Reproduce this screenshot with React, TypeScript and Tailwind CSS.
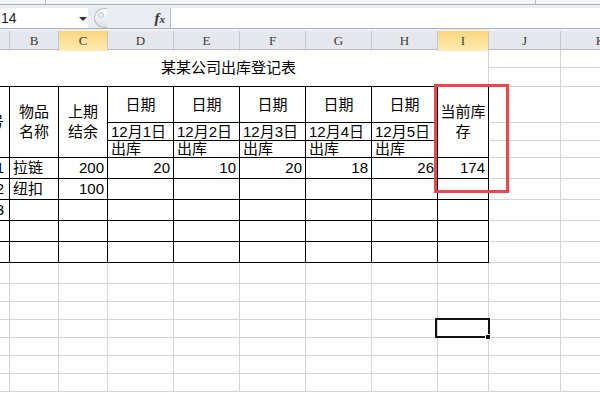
import React from "react";

type CellProps = {
  span?: string;
  edge?: string;
  align?: string;
  children?: React.ReactNode;
};

// one worksheet cell; right/bottom borders act as the gridlines
function Cell({ span = "", edge = "border-[#d4d4d4]", align = "justify-start pl-[3px]", children }: CellProps) {
  return (
    <div className={`${span} flex items-center overflow-hidden whitespace-nowrap border-r border-b ${edge} ${align}`}>
      {children}
    </div>
  );
}

const GRID = "border-[#d4d4d4]";
const INK = "border-black";

function Blank({ n, edge = GRID }: { n: number; edge?: string }) {
  return (
    <>
      {Array.from({ length: n }).map((_, i) => (
        <Cell key={i} edge={edge} />
      ))}
    </>
  );
}

const dates = ["12月1日", "12月2日", "12月3日", "12月4日", "12月5日"];
const outbound = ["20", "10", "20", "18", "26"];

function Toolbar() {
  return (
    <>
      <div className="flex h-[5px] border-b border-[#a9b0b9] bg-[#f3f4f6]">
        <div className="w-[46px] border-r border-[#b4bac2]" />
        <div className="w-[490px] border-r border-[#b4bac2]" />
      </div>
      <div className="h-[3px] bg-[#e9ecf0]" />
      <div className="flex h-[21px] border-b border-[#a9b0b9] bg-[#e9ecf0]">
        <div className="relative flex w-[88px] items-center bg-white pl-[1px] font-['Liberation_Sans',sans-serif] text-[14px] text-[#222]">
          14
          <svg className="absolute right-[1px] top-[9px]" width="8" height="4" viewBox="0 0 8 4">
            <polygon points="0,0 8,0 4,4" fill="#333" />
          </svg>
        </div>
        <div className="w-[6px]" />
        <div className="relative h-[20px] w-[13px] rounded-l-full border border-r-0 border-[#b3b9c1] bg-gradient-to-b from-white to-[#dde1e6]">
          <div className="absolute left-[3px] top-[3px] h-[6px] w-[6px] rounded-full border border-[#c4c9cf] bg-[#eef0f2]" />
        </div>
        <div className="flex w-[63px] items-center justify-end pr-[5px] font-['Liberation_Serif',serif] italic font-bold text-[#333]">
          <span className="text-[15px] leading-none">f</span>
          <span className="mt-[3px] text-[11px] leading-none">x</span>
        </div>
        <div className="flex-1 border-l border-[#b4bac2] bg-white" />
      </div>
      <div className="h-[2px] bg-[#eef0f3]" />
    </>
  );
}

const COLS = "grid-cols-[41px_49px_49px_66px_66px_66px_66px_66px_51px_72px_80px]";

function ColumnHeaders() {
  const letters = ["", "B", "C", "D", "E", "F", "G", "H", "I", "J", "K"];
  return (
    <div className="h-[19px] border-b border-[#b7bcc3] bg-[#e4e7eb]">
      <div className={`ml-[-31px] grid h-full ${COLS}`}>
        {letters.map((l) => {
          const picked = l === "C" || l === "I";
          return (
            <div
              key={l || "A"}
              className={`flex items-center justify-center border-r border-[#c3c8cf] font-['Liberation_Serif',serif] text-[13px] text-[#3a3a3a] ${
                picked ? "bg-gradient-to-b from-[#f9d67c] to-[#fdebb4]" : ""
              }`}
            >
              {l}
            </div>
          );
        })}
      </div>
    </div>
  );
}

function Sheet() {
  return (
    <div className="relative font-['Liberation_Sans','Noto_Sans_CJK_SC',sans-serif] text-[15px] leading-[18px] text-black">
      <div className={`ml-[-31px] grid ${COLS} grid-rows-[18px_19px_36px_18px_17px_21px_21px_21px_21px_21px_21px_18px_18px_18px_18px_18px_18px_18px]`}>
        {/* title, rows 1-2 */}
        <Cell span="col-span-9 row-span-2" edge="border-r-[#d4d4d4] border-b-black" align="justify-center">
          某某公司出库登记表
        </Cell>
        <Blank n={4} />

        {/* header rows */}
        <Cell span="row-span-3" edge={INK} align="justify-center">序号</Cell>
        <Cell span="row-span-3" edge={INK} align="justify-center text-center leading-[20px]">
          <span>物品<br />名称</span>
        </Cell>
        <Cell span="row-span-3" edge={INK} align="justify-center text-center leading-[20px]">
          <span>上期<br />结余</span>
        </Cell>
        {dates.map((d) => (
          <Cell key={d} edge={INK} align="justify-center">日期</Cell>
        ))}
        <Cell span="row-span-3" edge={INK} align="justify-center text-center leading-[20px]">
          <span>当前库<br />存</span>
        </Cell>
        <Blank n={2} />
        {dates.map((d) => (
          <Cell key={d} edge={INK} align="justify-start pl-[3px]">{d}</Cell>
        ))}
        <Blank n={2} />
        {dates.map((d) => (
          <Cell key={d} edge={INK}>出库</Cell>
        ))}
        <Blank n={2} />

        {/* data rows */}
        <Cell edge={INK} align="justify-end pr-[5px]">1</Cell>
        <Cell edge={INK}>拉链</Cell>
        <Cell edge={INK} align="justify-end pr-[3px]">200</Cell>
        {outbound.map((v, i) => (
          <Cell key={i} edge={INK} align="justify-end pr-[3px]">{v}</Cell>
        ))}
        <Cell edge={INK} align="justify-end pr-[3px]">174</Cell>
        <Blank n={2} />

        <Cell edge={INK} align="justify-end pr-[5px]">2</Cell>
        <Cell edge={INK}>纽扣</Cell>
        <Cell edge={INK} align="justify-end pr-[3px]">100</Cell>
        <Blank n={6} edge={INK} />
        <Blank n={2} />

        <Cell edge={INK} align="justify-end pr-[5px]">3</Cell>
        <Blank n={8} edge={INK} />
        <Blank n={2} />

        <Blank n={9} edge={INK} />
        <Blank n={2} />
        <Blank n={9} edge={INK} />
        <Blank n={2} />

        {/* empty sheet below the table */}
        <Blank n={77} />
      </div>

      {/* red highlight around the stock column */}
      <div className="absolute left-[434px] top-[34px] h-[109px] w-[75px] border-[3px] border-[#e8484c]" />

      {/* active cell I14 with fill handle */}
      <div className="absolute left-[435px] top-[268px] h-[20px] w-[55px] border-2 border-[#111]" />
      <div className="absolute left-[485px] top-[284px] h-[6px] w-[6px] border border-white bg-[#111]" />
    </div>
  );
}

export default function App() {
  return (
    <div className="relative h-[401px] w-[600px] overflow-hidden bg-white">
      <Toolbar />
      <ColumnHeaders />
      <Sheet />
    </div>
  );
}
